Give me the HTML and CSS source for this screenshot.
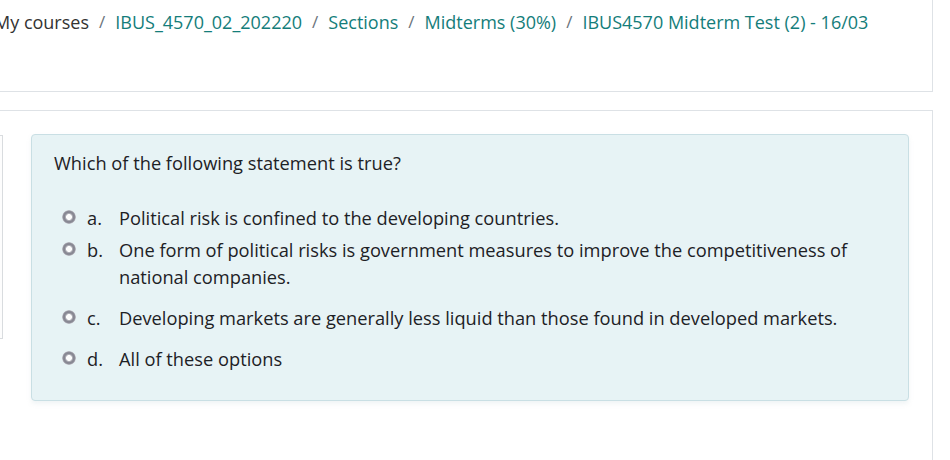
FILE: index.html
```html
<!DOCTYPE html>
<html>
<head>
<meta charset="utf-8">
<link rel="stylesheet" href="styles.css">
</head>
<body>
<div class="page">
  <div class="card header-card">
    <nav class="crumbs">
      <span class="crumb-home">My courses</span>
      <span class="sep">/</span>
      <a class="crumb">IBUS_4570_02_202220</a>
      <span class="sep">/</span>
      <a class="crumb">Sections</a>
      <span class="sep">/</span>
      <a class="crumb">Midterms (30%)</a>
      <span class="sep">/</span>
      <a class="crumb">IBUS4570 Midterm Test (2) - 16/03</a>
    </nav>
  </div>
  <div class="card main-card">
    <div class="que">
      <div class="info"></div>
      <div class="formulation">
        <div class="qtext">Which of the following statement is true?</div>
        <div class="answers">
          <div class="opt opt-a"><span class="radio"></span><span class="letter">a.</span><span class="otext">Political risk is confined to the developing countries.</span></div>
          <div class="opt opt-b"><span class="radio"></span><span class="letter">b.</span><span class="otext">One form of political risks is government measures to improve the competitiveness of national companies.</span></div>
          <div class="opt opt-c"><span class="radio"></span><span class="letter">c.</span><span class="otext">Developing markets are generally less liquid than those found in developed markets.</span></div>
          <div class="opt opt-d"><span class="radio"></span><span class="letter">d.</span><span class="otext">All of these options</span></div>
        </div>
      </div>
    </div>
  </div>
</div>
</body>
</html>
```
FILE: styles.css
```css
html, body {
  margin: 0;
  padding: 0;
  background: #fff;
  overflow: hidden;
}
body {
  font-family: "Open Sans", "Noto Sans", sans-serif;
  color: #1d2125;
  font-size: 18.25px;
}
.page {
  margin-left: -40px;
  width: 973px;
}
.card {
  background: #fff;
  border: 1px solid #dee2e6;
  box-sizing: border-box;
}
.header-card {
  margin-top: -10px;
  height: 102px;
  padding: 19px 0 0 33px;
}
.crumbs {
  display: flex;
  align-items: center;
  white-space: nowrap;
  font-size: 18px;
  line-height: 24px;
}
.crumb-home { color: #333; }
.crumb { color: #147d7a; text-decoration: none; }
.sep { color: #6a737b; padding: 0 10px; font-size: 17px; }
.main-card {
  margin-top: 18px;
  height: 400px;
  padding-top: 23px;
}
.que {
  display: flex;
  align-items: flex-start;
  gap: 28px;
}
.info {
  width: 42px;
  height: 204px;
  box-sizing: border-box;
  border: 1px solid #d9dcdf;
  border-left: none;
  margin-top: 1px;
  background: #fdfdfd;
}
.formulation {
  width: 878px;
  box-sizing: border-box;
  background: #e7f3f5;
  border: 1px solid #c9dfe4;
  border-radius: 4px;
  padding: 14px 22px 28px 22px;
  box-shadow: 0 3px 4px rgba(200, 215, 220, 0.25);
}
.qtext {
  line-height: 27px;
  margin-bottom: 28px;
}
.opt {
  display: flex;
  align-items: flex-start;
  line-height: 27px;
}
.opt-a { margin-bottom: 5px; }
.opt-b { margin-bottom: 14px; }
.opt-c { margin-bottom: 14px; }
.radio {
  flex: none;
  width: 14px;
  height: 14px;
  border-radius: 50%;
  margin: 6px 11px 0 8px;
  background: radial-gradient(circle at 50% 50%, #fdfdfd 0, #fdfdfd 2.6px, #b9b9c0 3.2px, #858590 4.6px, #8d8d98 5.8px, #b3b3bb 6.6px, rgba(200,200,206,0.6) 7px);
}
.letter {
  flex: none;
  width: 32px;
}
.otext {
  flex: 1;
  padding-right: 8px;
}
```
